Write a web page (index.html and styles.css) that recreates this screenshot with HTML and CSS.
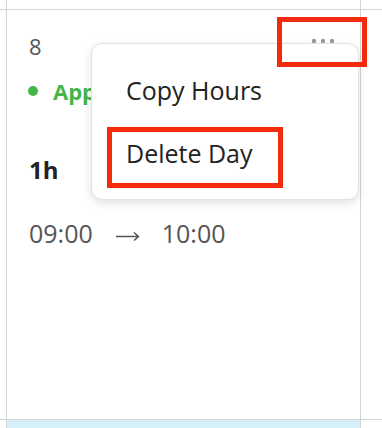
FILE: index.html
```html
<!DOCTYPE html>
<html lang="en">
<head>
    <meta charset="UTF-8">
    <meta name="viewport" content="width=device-width, initial-scale=1.0">
    <title>Timesheet Day</title>
    <link rel="stylesheet" href="styles.css">
</head>
<body>

    <div class="week">
        <div class="cell"></div>
        <div class="cell"></div>
        <div class="cell"></div>

        <div class="cell"></div>
        <div class="cell day">
            <div class="day-header">
                <span class="day-num">8</span>
                <button class="more-btn" aria-label="More">
                    <svg width="24" height="6" viewBox="0 0 24 6">
                        <circle cx="3" cy="3" r="2.2" fill="#9a9a9a"/>
                        <circle cx="12" cy="3" r="2.2" fill="#9a9a9a"/>
                        <circle cx="21" cy="3" r="2.2" fill="#9a9a9a"/>
                    </svg>
                </button>
            </div>

            <div class="status">
                <span class="status-dot"></span>
                <span class="status-text">Approved</span>
            </div>

            <div class="total">1h</div>

            <div class="time-range">
                <span>09:00</span>
                <svg class="arrow" width="24" height="10" viewBox="0 0 24 10">
                    <path d="M0 5.5H22.5M18 1.5L22.5 5.5L18 9.5" fill="none" stroke="#555" stroke-width="1.5"/>
                </svg>
                <span>10:00</span>
            </div>

            <!-- dropdown menu for the day -->
            <div class="menu">
                <div class="menu-item">Copy Hours</div>
                <div class="menu-item">Delete Day</div>
            </div>
        </div>
        <div class="cell"></div>

        <div class="cell"></div>
        <div class="cell today"></div>
        <div class="cell"></div>
    </div>

    <!-- highlight marks -->
    <div class="mark mark-more"></div>
    <div class="mark mark-delete"></div>

</body>
</html>
```
FILE: styles.css
```css
body {
    margin: 0;
    font-family: "Open Sans", "Noto Sans", sans-serif;
    background-color: #fff;
    overflow: hidden;
}

.week {
    display: grid;
    grid-template-columns: 6px 353px 21px;
    grid-template-rows: 9px 409px 20px;
    gap: 1px;
    background-color: #d4d4d4;
    height: 428px;
}

.cell {
    background-color: #fff;
}

.today {
    background-color: #d5f0f9;
}

.day {
    position: relative;
    padding: 21px 25px 0 22px;
}

.day-header {
    display: flex;
    justify-content: space-between;
    align-items: flex-start;
}

.day-num {
    font-size: 22px;
    line-height: 30px;
    color: #555;
}

.more-btn {
    border: none;
    background: none;
    padding: 0;
    margin-top: 7px;
    line-height: 0;
}

.status {
    display: flex;
    align-items: center;
    margin-top: 15px;
    line-height: 30px;
}

.status-dot {
    width: 10px;
    height: 10px;
    border-radius: 50%;
    background-color: #45b549;
    margin-left: -1px;
    margin-right: 15px;
}

.status-text {
    white-space: nowrap;
    font-size: 22px;
    font-weight: bold;
    color: #45b549;
}

.total {
    margin-top: 49px;
    font-size: 24px;
    font-weight: bold;
    line-height: 30px;
    color: #222;
}

.time-range {
    display: flex;
    align-items: center;
    margin-top: 32px;
    font-size: 25px;
    line-height: 32px;
    color: #555;
}

.arrow {
    margin: 5px 22px 0 23px;
}

.menu {
    position: absolute;
    left: 84px;
    top: 33px;
    width: 266px;
    padding: 15px 0 14px;
    background-color: #fff;
    border: 1px solid #e2e2e2;
    border-radius: 11px;
    box-shadow: 0 3px 10px rgba(0, 0, 0, 0.12);
}

.menu-item {
    padding: 14px 20px 14px 34px;
    font-size: 25px;
    line-height: 35px;
    color: #222;
}

.mark {
    position: absolute;
    border: 5px solid #f22b0c;
    box-sizing: border-box;
}

.mark-more {
    left: 277px;
    top: 17px;
    width: 90px;
    height: 50px;
}

.mark-delete {
    left: 107px;
    top: 127px;
    width: 176px;
    height: 61px;
}
```
